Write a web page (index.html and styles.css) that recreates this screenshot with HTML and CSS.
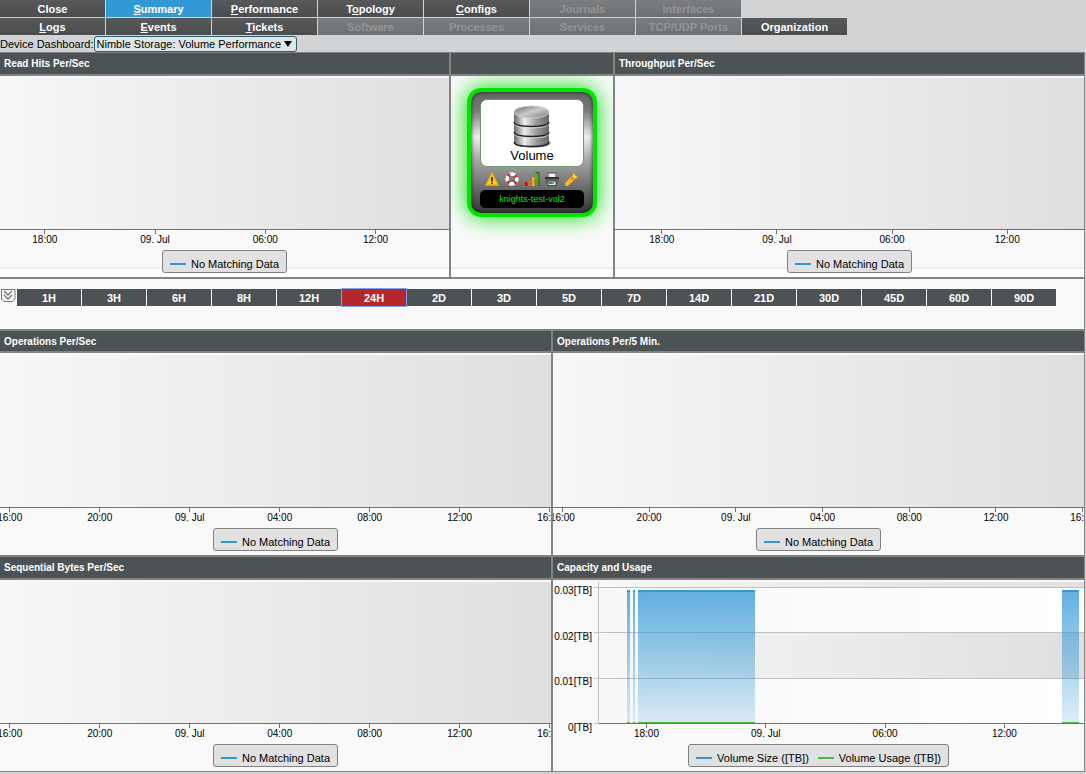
FILE: index.html
```
<!DOCTYPE html>
<html lang="en">
<head>
    <meta charset="UTF-8">
    <meta name="viewport" content="width=device-width, initial-scale=1.0">
    <title>Device Dashboard</title>
    <link rel="stylesheet" href="styles.css">
</head>
<body>
    <nav class="tabs">
        <a class="tab" href="#">Close</a>
        <a class="tab active" href="#"><u>S</u>ummary</a>
        <a class="tab" href="#"><u>P</u>erformance</a>
        <a class="tab" href="#">T<u>o</u>pology</a>
        <a class="tab" href="#"><u>C</u>onfigs</a>
        <span class="tab disabled">Journals</span>
        <span class="tab disabled">Interfaces</span>
        <a class="tab first" href="#"><u>L</u>ogs</a>
        <a class="tab" href="#"><u>E</u>vents</a>
        <a class="tab" href="#"><u>T</u>ickets</a>
        <span class="tab disabled">Software</span>
        <span class="tab disabled">Processes</span>
        <span class="tab disabled">Services</span>
        <span class="tab disabled">TCP/UDP Ports</span>
        <a class="tab" href="#">Organization</a>
    </nav>

    <div class="picker">
        <label for="dashboard">Device Dashboard:</label>
        <span class="select-wrap">
            <select id="dashboard">
                <option>Nimble Storage: Volume Performance</option>
            </select>
        </span>
    </div>

    <main class="board">
        <div class="row row-top">
            <section class="panel">
                <h2>Read Hits Per/Sec</h2>
                <div class="chart">
                    <div class="plot"></div>
                    <div class="axis six-hours">
                        <span>18:00</span><span>09. Jul</span><span>06:00</span><span>12:00</span>
                    </div>
                    <div class="legend"><span class="key">No Matching Data</span></div>
                </div>
            </section>
            <section class="panel">
                <h2></h2>
                <div class="chart device-cell">
                    <div class="device">
                        <div class="device-type">
                            <svg width="44" height="44" viewBox="0 0 44 44">
                                <defs>
                                    <linearGradient id="metal">
                                        <stop offset="0" stop-color="#666"/>
                                        <stop offset=".3" stop-color="#eee"/>
                                        <stop offset=".65" stop-color="#999"/>
                                        <stop offset="1" stop-color="#666"/>
                                    </linearGradient>
                                    <linearGradient id="lid" x2="1" y2="1">
                                        <stop offset="0" stop-color="#666"/>
                                        <stop offset=".5" stop-color="#ccc"/>
                                        <stop offset="1" stop-color="#777"/>
                                    </linearGradient>
                                </defs>
                                <ellipse cx="23" cy="38" rx="18" ry="5" fill="#bbb"/>
                                <path d="M4 7v31c0 6 35 6 35 0V7z" fill="url(#metal)"/>
                                <path d="M4 17c0 6 35 6 35 0M4 27c0 6 35 6 35 0M4 37c0 6 35 6 35 0" fill="none" stroke="#222" stroke-width="1.3"/>
                                <path d="M4 18.500c0 6 35 6 35 0M4 28.500c0 6 35 6 35 0" fill="none" stroke="#ddd" stroke-width=".8"/>
                                <ellipse cx="21.500" cy="7" rx="17.500" ry="6" fill="url(#lid)" stroke="#ccc"/>
                            </svg>
                            <span>Volume</span>
                        </div>
                        <div class="device-tools">
                            <svg viewBox="0 0 16 16"><path d="M8 2l6 12H2z" fill="#fc2" stroke="#e8b010" stroke-width="1.500" stroke-linejoin="round"/><path d="M8 6v4.500M8 11.500v1.500" stroke="#222" stroke-width="1.600"/></svg>
                            <svg viewBox="0 0 16 16"><circle cx="8" cy="8" r="6.800" fill="none" stroke="#777" stroke-width=".8"/><circle cx="8" cy="8" r="4.800" fill="none" stroke="#fff" stroke-width="3.800"/><circle cx="8" cy="8" r="4.800" fill="none" stroke="#c43a30" stroke-width="3.800" stroke-dasharray="2.600 4.940" stroke-dashoffset="-2.470"/><circle cx="8" cy="8" r="2.700" fill="none" stroke="#555" stroke-width=".6"/></svg>
                            <svg viewBox="0 0 16 16"><path d="M1 11h2.500v4H1z" fill="#d00"/><path d="M4.500 9.500H7V15H4.500z" fill="#e63"/><path d="M8 6h2.500v9H8z" fill="#ea2"/><path d="M11.500 1.500H15V15h-3.500z" fill="#5a1"/><path d="M11.500 1.500H15V15" fill="none" stroke="#252"/></svg>
                            <svg viewBox="0 0 16 16"><path d="M4 2h8v5H4z" fill="#e8eef4" stroke="#555"/><path d="M1 6h14v6H1z" fill="#666"/><path d="M1 6h14v2H1z" fill="#333"/><path d="M4 10h8v4.500H4z" fill="#eee" stroke="#444"/><path d="M5 11h3v2H5z" fill="#27c"/><path d="M8 11h2v2H8z" fill="#4b6"/></svg>
                            <svg viewBox="0 0 16 16"><path d="M3 13l6-6" stroke="#fb1" stroke-width="4" stroke-linecap="round"/><path d="M7.500 8.500L10 6" stroke="#d80" stroke-width="3"/><path d="M14 5a3 3 0 0 1-5 2 3 3 0 0 1 2.500-5L11 4.500 12.500 5.500z" fill="#ffd65a" stroke="#b80" stroke-width=".7"/></svg>
                        </div>
                        <div class="device-name">knights-test-vol2</div>
                    </div>
                </div>
            </section>
            <section class="panel">
                <h2>Throughput Per/Sec</h2>
                <div class="chart">
                    <div class="plot"></div>
                    <div class="axis six-hours">
                        <span>18:00</span><span>09. Jul</span><span>06:00</span><span>12:00</span>
                    </div>
                    <div class="legend"><span class="key">No Matching Data</span></div>
                </div>
            </section>
        </div>

        <div class="ranges">
            <button class="expand" type="button" aria-label="Expand">
                <svg width="16" height="14" viewBox="0 0 16 14" fill="none" stroke="#777">
                    <path d="M1.500 0v10l2.500 2.500h8.500l2.500-2.500V0M1 .5h14"/>
                    <path d="M4 2l4 4 4-4M4 6l4 4 4-4" stroke-width="1.400"/>
                </svg>
            </button>
            <button class="range" type="button">1H</button>
            <button class="range" type="button">3H</button>
            <button class="range" type="button">6H</button>
            <button class="range" type="button">8H</button>
            <button class="range" type="button">12H</button>
            <button class="range selected" type="button">24H</button>
            <button class="range" type="button">2D</button>
            <button class="range" type="button">3D</button>
            <button class="range" type="button">5D</button>
            <button class="range" type="button">7D</button>
            <button class="range" type="button">14D</button>
            <button class="range" type="button">21D</button>
            <button class="range" type="button">30D</button>
            <button class="range" type="button">45D</button>
            <button class="range" type="button">60D</button>
            <button class="range" type="button">90D</button>
        </div>

        <div class="row row-middle">
            <section class="panel">
                <h2>Operations Per/Sec</h2>
                <div class="chart">
                    <div class="plot"></div>
                    <div class="axis four-hours">
                        <span>16:00</span><span>20:00</span><span>09. Jul</span><span>04:00</span><span>08:00</span><span>12:00</span><span>16:00</span>
                    </div>
                    <div class="legend"><span class="key">No Matching Data</span></div>
                </div>
            </section>
            <section class="panel">
                <h2>Operations Per/5 Min.</h2>
                <div class="chart">
                    <div class="plot"></div>
                    <div class="axis four-hours">
                        <span>16:00</span><span>20:00</span><span>09. Jul</span><span>04:00</span><span>08:00</span><span>12:00</span><span>16:00</span>
                    </div>
                    <div class="legend"><span class="key">No Matching Data</span></div>
                </div>
            </section>
        </div>

        <div class="row row-bottom">
            <section class="panel">
                <h2>Sequential Bytes Per/Sec</h2>
                <div class="chart">
                    <div class="plot"></div>
                    <div class="axis four-hours">
                        <span>16:00</span><span>20:00</span><span>09. Jul</span><span>04:00</span><span>08:00</span><span>12:00</span><span>16:00</span>
                    </div>
                    <div class="legend"><span class="key">No Matching Data</span></div>
                </div>
            </section>
            <section class="panel">
                <h2>Capacity and Usage</h2>
                <div class="chart">
                    <div class="capacity">
                        <div class="y-labels">
                            <span>0.03[TB]</span><span>0.02[TB]</span><span>0.01[TB]</span><span>0[TB]</span>
                        </div>
                        <div class="y-ticks"><i></i><i></i><i></i><i></i></div>
                        <div class="capacity-plot">
                            <svg class="area" viewBox="0 0 486 142" preserveAspectRatio="none" shape-rendering="crispEdges">
                                <defs>
                                    <linearGradient id="band">
                                        <stop offset="0" stop-color="#f7f7f7"/>
                                        <stop offset="1" stop-color="#dfdfdf"/>
                                    </linearGradient>
                                    <linearGradient id="pale">
                                        <stop offset="0" stop-color="#f7f7f7"/>
                                        <stop offset="1" stop-color="#fff"/>
                                    </linearGradient>
                                    <linearGradient id="size" x2="0" y2="1">
                                        <stop offset="0" stop-color="#3399d6" stop-opacity=".78"/>
                                        <stop offset="1" stop-color="#3399d6" stop-opacity=".16"/>
                                    </linearGradient>
                                </defs>
                                <rect width="486" height="142" fill="url(#pale)"/>
                                <rect width="486" height="5" fill="url(#band)"/>
                                <rect y="50" width="486" height="46" fill="url(#band)"/>
                                <path d="M0 5.500h486M0 50.500h486M0 96.500h486" stroke="#c0c0c0"/>
                                <g fill="url(#size)">
                                    <rect x="29" y="8" width="3" height="133"/>
                                    <rect x="35" y="8" width="2" height="133"/>
                                    <rect x="40" y="8" width="117" height="133"/>
                                    <rect x="464" y="8" width="17" height="133"/>
                                </g>
                                <path d="M29 9h3M35 9h2M40 9h117M464 9h17" stroke="#3399d6" stroke-width="2"/>
                                <path d="M29 140.500h3M35 140.500h2M40 140.500h117M464 140.500h17" stroke="#4db848" stroke-width="2"/>
                                <path d="M0 141.500h486" stroke="#707070"/>
                                <path d="M.5 0v142" stroke="#c0c0c0"/>
                            </svg>
                            <div class="axis six-hours">
                                <span>18:00</span><span>09. Jul</span><span>06:00</span><span>12:00</span>
                            </div>
                        </div>
                    </div>
                    <div class="legend"><span class="key">Volume Size ([TB])</span><span class="key usage">Volume Usage ([TB])</span></div>
                </div>
            </section>
        </div>
    </main>
</body>
</html>
```
FILE: styles.css
```
* {
    box-sizing: border-box;
}
body {
    margin: 0;
    background-color: #d1d3d4;
    font-family: "Liberation Sans", Arial, sans-serif;
    font-size: 11px;
    color: #000;
}

/* tabs */
.tabs {
    display: grid;
    grid-template-columns: repeat(8, 105px);
    grid-auto-rows: 17px;
    gap: 1px;
}
.tab {
    background: linear-gradient(#57595b, #4a4c4e);
    color: #fff;
    font-size: 11px;
    font-weight: bold;
    line-height: 18px;
    text-align: center;
    text-decoration: none;
    white-space: nowrap;
}
.tab.first {
    grid-column: 1;
}
.tab.active {
    background: #3399d6;
}
.tab.disabled {
    background: linear-gradient(#7b7d7f, #6d7072);
    color: #929495;
}

/* dashboard picker */
.picker {
    display: flex;
    align-items: center;
    height: 17px;
}
.select-wrap {
    position: relative;
}
.select-wrap::after {
    content: "";
    position: absolute;
    right: 5px;
    top: 5px;
    border: 4px solid transparent;
    border-top: 6px solid #000;
    border-bottom: 0;
    pointer-events: none;
}
.picker select {
    display: block;
    appearance: none;
    width: 203px;
    height: 16px;
    margin: 0;
    padding: 0 2px;
    border: 1px solid #2d5f6e;
    border-radius: 3px;
    background-color: #dde5e5;
    color: #000;
    font: 11px/14px "Liberation Sans", Arial, sans-serif;
}

/* board */
.board {
    margin-right: 1px;
    border: 1px solid #808484;
    border-left: 0;
    background-color: #f9f9f9;
}
.row {
    display: grid;
    gap: 2px;
    background-color: #808484;
}
.row-top {
    grid-template-columns: 449fr 162px 469fr;
    border-bottom: 2px solid #808484;
}
.row-middle,
.row-bottom {
    grid-template-columns: 551fr 531fr;
}
.row-middle {
    border-top: 2px solid #808484;
    border-bottom: 2px solid #808484;
}
.panel {
    display: flex;
    flex-direction: column;
    min-width: 0;
}
.panel h2 {
    height: 23px;
    margin: 0;
    padding-left: 4px;
    border-bottom: 2px solid #808484;
    background-color: #4c5355;
    color: #fff;
    font-size: 10px;
    font-weight: bold;
    line-height: 21px;
}
.row-middle h2 {
    height: 22px;
}

/* charts */
.chart {
    flex: 1;
    padding: 2px 0 4px;
    overflow: hidden;
    background-color: #f9f9f9;
}
.row-top .chart {
    background-image: linear-gradient(to top, #fff 8px, #eee 8px, #eee 10px, transparent 10px);
}
.plot {
    height: 152px;
    border-bottom: 1px solid #707070;
    background: linear-gradient(to right, #f7f7f7, #dfdfdf);
}
.row-middle .plot {
    height: 153px;
}
.row-bottom .plot {
    height: 142px;
}
.axis {
    display: flex;
    height: 20px;
    font-size: 10px;
    line-height: 12px;
}
.axis span {
    flex-shrink: 0;
    text-align: center;
}
.axis span::before {
    content: "";
    display: block;
    width: 1px;
    height: 4px;
    margin: 0 auto;
    background-color: #707070;
}
.six-hours {
    margin-left: -2.3%;
}
.six-hours span {
    width: 24%;
}
.four-hours {
    margin-left: -6.4%;
}
.four-hours span {
    width: 15.35%;
}
.legend {
    display: flex;
    gap: 9px;
    width: fit-content;
    height: 23px;
    margin: 0 auto;
    padding: 4px 7px 0;
    border: 1px solid #808080;
    border-radius: 3px;
    background-color: #e1e1e1;
    font-size: 11px;
    line-height: 20px;
    white-space: nowrap;
}
.key {
    display: flex;
    align-items: center;
    gap: 5px;
}
.key::before {
    content: "";
    width: 16px;
    height: 2px;
    background-color: #3399d6;
}
.key.usage::before {
    background-color: #4db848;
}

/* capacity chart */
.capacity {
    display: flex;
    height: 162px;
}
.y-labels {
    display: flex;
    flex-direction: column;
    justify-content: space-between;
    width: 39px;
    height: 152px;
    padding-top: 3px;
    font-size: 10px;
    line-height: 12px;
    text-align: right;
    white-space: nowrap;
}
.y-ticks {
    display: flex;
    flex-direction: column;
    justify-content: space-between;
    width: 6px;
    height: 142px;
    padding: 5px 0 0 2px;
}
.y-ticks i {
    height: 1px;
    background-color: #c0c0c0;
}
.capacity-plot {
    flex: 1;
    min-width: 0;
}
.area {
    display: block;
    width: 100%;
    height: 142px;
}

/* device badge */
.device-cell {
    padding-top: 12px;
}
.device {
    display: flex;
    flex-direction: column;
    align-items: center;
    width: 130px;
    height: 129px;
    margin: 0 auto;
    padding-top: 7px;
    border: 4px solid #00e400;
    border-radius: 14px;
    background: linear-gradient(#666, #777 15%, #eee 37%, #aaa 55%, #777 75%, #333);
    box-shadow: 0 0 22px #0d0, inset 0 0 4px #222;
}
.device-type {
    display: flex;
    flex-direction: column;
    align-items: center;
    width: 104px;
    height: 68px;
    padding-top: 5px;
    border: 1px solid #6a9a6a;
    border-radius: 7px;
    background-color: #fff;
    font-size: 13px;
    line-height: 14px;
}
.device-tools {
    display: flex;
    gap: 4px;
    padding: 4px 0 3px;
}
.device-tools svg {
    width: 16px;
    height: 16px;
}
.device-name {
    width: 104px;
    height: 18px;
    border-radius: 5px;
    background-color: #000;
    color: #0e0;
    font-size: 9px;
    line-height: 18px;
    text-align: center;
}

/* time ranges */
.ranges {
    display: flex;
    align-items: flex-start;
    gap: 1px;
    height: 50px;
    padding-top: 10px;
    padding-right: 28px;
}
.expand {
    flex: none;
    width: 16px;
    height: 14px;
    padding: 0;
    border: 0;
    background: none;
}
.expand svg {
    display: block;
}
.range {
    flex: 1;
    height: 17px;
    padding: 1px 0 0;
    border: 0;
    background-color: #4c5355;
    color: #fff;
    font: bold 11px/16px "Liberation Sans", Arial, sans-serif;
}
.range.selected {
    background-color: #b3282d;
    outline: 1px solid #7f9fe8;
}
```
